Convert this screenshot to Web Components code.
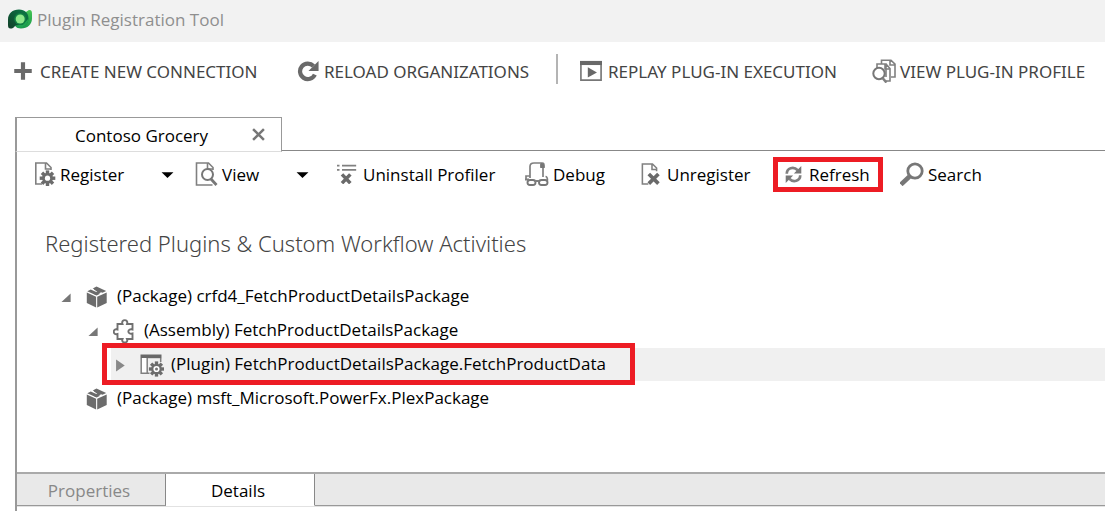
<!DOCTYPE html>
<html lang="en">
<head>
<meta charset="utf-8">
<meta name="viewport" content="width=device-width, initial-scale=1">
<title>Plugin Registration Tool</title>
<style>
  body { margin: 0; background: #fff; font-family: "Open Sans", "Noto Sans", sans-serif; font-size: 17px; line-height: 24px; color: #000; }
</style>
</head>
<body>
<prt-app></prt-app>

<template id="app-template">
  <style>
    :host { display: flex; flex-direction: column; min-height: 100vh; }
    .workspace { flex: 1; display: flex; flex-direction: column; margin-left: 15px; margin-top: 17px; }
    .panel { flex: 1; display: flex; flex-direction: column; border-left: 2px solid #999; }
    .tree-area { flex: 1; padding-bottom: 24px; }
    h2 { margin: 31px 0 21px 28px; font-family: "Noto Sans", "Open Sans", sans-serif; font-weight: 300; font-size: 22px; line-height: 32px; color: #444; }
  </style>
  <prt-titlebar>Plugin Registration Tool</prt-titlebar>
  <prt-commands></prt-commands>
  <main class="workspace">
    <prt-document-tab>Contoso Grocery</prt-document-tab>
    <div class="panel">
      <prt-toolbar></prt-toolbar>
      <section class="tree-area">
        <h2>Registered Plugins &amp; Custom Workflow Activities</h2>
        <prt-tree></prt-tree>
      </section>
      <prt-detail-tabs></prt-detail-tabs>
    </div>
  </main>
</template>

<template id="titlebar-template">
  <style>
    :host { display: block; background: #f2f2f2; color: #8f8f8f; }
    header { display: flex; align-items: center; height: 42px; padding: 0 8px; gap: 5px; box-sizing: border-box; }
    h1 { margin: 0; font-size: 17px; font-weight: 400; line-height: 24px; padding-bottom: 3px; }
    prt-icon { padding-bottom: 4px; }
  </style>
  <header><prt-icon name="logo" size="24"></prt-icon><h1><slot></slot></h1></header>
</template>

<template id="commands-template">
  <style>
    :host { display: block; font-family: "Noto Sans", "Open Sans", sans-serif; }
    nav { display: grid; grid-template-columns: 284px 259px 24px 292px auto; justify-content: start; align-items: center; height: 58px; padding-left: 13px; white-space: nowrap; }
    .sep { width: 2px; height: 30px; background: #b4b4b4; align-self: start; margin-top: 12px; }
    prt-button { color: #444; }
  </style>
  <nav aria-label="Commands">
    <prt-button icon="plus" size="20" style="--gap:7px">CREATE NEW CONNECTION</prt-button>
    <prt-button icon="reload" size="22" style="--gap:5px">RELOAD ORGANIZATIONS</prt-button>
    <div class="sep"></div>
    <prt-button icon="replay" size="22" style="--gap:6px">REPLAY PLUG-IN EXECUTION</prt-button>
    <prt-button icon="profile" size="24" style="--gap:4px">VIEW PLUG-IN PROFILE</prt-button>
  </nav>
</template>

<template id="button-template">
  <style>
    :host { display: block; }
    button { display: flex; align-items: center; gap: var(--gap, 4px); border: 0; background: none; padding: 0; margin: 0; font: inherit; color: inherit; white-space: nowrap; cursor: pointer; width: 100%; text-align: left; }
    span { padding-top: var(--drop, 2px); }
  </style>
  <button type="button"><prt-icon></prt-icon><span><slot></slot></span></button>
</template>

<template id="document-tab-template">
  <style>
    :host { display: flex; }
    .tab { display: flex; align-items: center; box-sizing: border-box; width: 267px; height: 35px; border: 2px solid #999; border-top-width: 1px; border-right-width: 1px; border-bottom: 1px solid #ddd; padding: 2px 16px 0 58px; justify-content: space-between; }
    .rest { flex: 1; border-bottom: 1px solid #888; margin-bottom: 1px; }
    button { border: 0; padding: 0; background: none; font: inherit; display: flex; cursor: pointer; }
    button.close { padding-bottom: 2px; }
  </style>
  <div class="tab">
    <button type="button"><slot></slot></button>
    <button type="button" class="close" aria-label="Close"><prt-icon name="close" size="13"></prt-icon></button>
  </div>
  <div class="rest"></div>
</template>

<template id="toolbar-template">
  <style>
    :host { display: block; }
    .bar { display: grid; grid-template-columns: 127px 34px 101px 41px 188px 116px 132px 127px auto; justify-content: start; align-items: center; height: 44px; padding-left: 17px; }
    .caret { border: 0; background: none; padding: 0; display: flex; cursor: pointer; }
    .marked { --drop: 0px; box-sizing: border-box; width: 110px; height: 35px; border: 5px solid #ed1c24; padding: 1px 0 0 7px; }
  </style>
  <div class="bar" role="toolbar">
    <prt-button icon="register" size="24" style="--gap:2px">Register</prt-button>
    <button class="caret" type="button" aria-label="Register options"><prt-icon name="caret" size="13"></prt-icon></button>
    <prt-button icon="view" size="24" style="--gap:3px">View</prt-button>
    <button class="caret" type="button" aria-label="View options"><prt-icon name="caret" size="13"></prt-icon></button>
    <prt-button icon="uninstall" size="20" style="--gap:6px">Uninstall Profiler</prt-button>
    <prt-button icon="debug" size="24">Debug</prt-button>
    <prt-button icon="unregister" size="22">Unregister</prt-button>
    <div class="marked"><prt-button icon="refresh" size="17" style="--gap:7px">Refresh</prt-button></div>
    <prt-button icon="search" size="24">Search</prt-button>
  </div>
</template>

<template id="tree-template">
  <style>:host { display: block; padding-left: 40px; }</style>
  <div role="tree" aria-label="Registered plugins">
    <prt-node icon="package" label="(Package) crfd4_FetchProductDetailsPackage" state="open">
      <prt-node icon="assembly" label="(Assembly) FetchProductDetailsPackage" state="open">
        <prt-node icon="plugin" label="(Plugin) FetchProductDetailsPackage.FetchProductData" state="closed" selected></prt-node>
      </prt-node>
    </prt-node>
    <prt-node icon="package" label="(Package) msft_Microsoft.PowerFx.PlexPackage"></prt-node>
  </div>
</template>

<template id="node-template">
  <style>
    :host { display: block; }
    .row { position: relative; display: grid; grid-template-columns: 25px 31px auto; justify-content: start; align-items: center; height: 33px; margin-bottom: 1px; padding-left: 4px; white-space: nowrap; }
    :host([selected]) .row { background: #f0f0f0; }
    :host([selected]) .row::after { content: ""; position: absolute; left: -9px; top: -5px; width: 533px; height: 42px; box-sizing: border-box; border: 5px solid #ed1c24; pointer-events: none; }
    .children { padding-left: 27px; }
    .label { padding-bottom: 2px; }
    .toggle { padding-top: 2px; }
    button { border: 0; background: none; padding: 0; display: flex; cursor: pointer; }
  </style>
  <div class="row"><span class="toggle"></span><prt-icon class="glyph" size="24"></prt-icon><span class="label"></span></div>
  <div class="children" role="group"><slot></slot></div>
</template>

<template id="detail-tabs-template">
  <style>
    :host { display: block; border-top: 2px solid #aaa; padding-bottom: 4px; }
    .tabs { display: flex; border-bottom: 1px solid #e2e2e2; }
    button { box-sizing: border-box; width: 149px; height: 32px; padding: 2px 4px 0 0; border: 0; border-right: 1px solid #888; border-bottom: 1px solid #999; background: #e9e9e9; color: #888; font: inherit; cursor: pointer; }
    button[aria-selected="true"] { background: #fff; color: #000; border-bottom-color: #fff; }
    .rest { flex: 1; background: #e9e9e9; border-bottom: 1px solid #999; }
  </style>
  <div class="tabs" role="tablist">
    <button type="button" role="tab" aria-selected="false">Properties</button>
    <button type="button" role="tab" aria-selected="true">Details</button>
    <div class="rest"></div>
  </div>
</template>

<script>
const gear = (cx, cy, r, hole) => {
  let teeth = "";
  for (let i = 0; i < 8; i++) teeth += `<rect x="${cx - r * .22}" y="${cy - r}" width="${r * .44}" height="${r * .6}" transform="rotate(${i * 45} ${cx} ${cy})"/>`;
  return `<g fill="#6c6c6c">${teeth}<circle cx="${cx}" cy="${cy}" r="${r * .7}"/></g><circle cx="${cx}" cy="${cy}" r="${hole}" fill="#fff"/>`;
};
const line = (d, w = 2, c = "#808080") => `<path d="${d}" fill="none" stroke="${c}" stroke-width="${w}"/>`;
const icons = {
  logo: `<defs><linearGradient id="a" x1="0" x2="1" y1="1" y2="0"><stop stop-color="#123f29"/><stop offset="1" stop-color="#0b7a48"/></linearGradient><linearGradient id="b" x1="0" x2="0" y1="1" y2="0"><stop stop-color="#18984b"/><stop offset="1" stop-color="#46c653"/></linearGradient></defs><path d="M21.5 3C23.5 3 24 4.500 24 7v4.500c0 6-4.500 10-11 10-2.500 0-4.500-.7-5.500-2.500L17 5c2 0 3-2 4.500-2z" fill="url(#b)"/><path d="M11 2.500C4.500 2.500 0 6.500 0 12.500V18c0 2.500.7 3.500 2.500 3.500 2 0 3-.6 4.500-2.500l7 1c4-1 6.500-4.500 6.500-8.500C20.500 6 17 2.500 11 2.500z" fill="url(#a)"/><path d="M20.500 11.500c0 5-4 9.500-9 8.900-2 0-4-.9-4.500-2l8-1z" fill="#1da350"/><circle cx="12.200" cy="12" r="6" fill="#108043"/><circle cx="12.200" cy="12" r="4.500" fill="#8de78a"/>`,
  plus: `<path d="M9.500 1.500h5v8h8v5h-8v8h-5v-8h-8v-5h8z" fill="#6a6a6a"/>`,
  reload: `<path d="M19.500 16A8.500 8.500 0 1 1 18 6.500" fill="none" stroke="#6a6a6a" stroke-width="4.600"/><path d="M23.500 1v10.900H12.500z" fill="#6a6a6a"/>`,
  replay: `<path d="M1 2h22v20H1z" fill="none" stroke="#777" stroke-width="1.800"/><path d="M0 1h24v4.500H0z" fill="#686868"/><path d="M8.500 8l10 5.500-10 5.500z" fill="#686868"/>`,
  profile: line("M5 9V5h9v13M14 5l4 4.500v12.500h-4M9.500 5V1.200H19l4 4V18h-4M18 1v5h5M13 5v5h5", 1.6) + `<circle cx="7" cy="14.500" r="5.700" fill="#fff" stroke="#777" stroke-width="2"/>` + line("M10.500 19l4 4.500", 2.6),
  close: line("M2 2l20 20M22 2L2 22", 4.6, "#777"),
  register: line("M8 22H1.800V1h10.700l4.500 4.500V8M11.500 1v6H17", 1.6) + gear(13.5, 16.2, 7.8, 2.6),
  view: line("M17.500 23H1.500V1h12l4.500 4.500V8M12.500 1v6H18", 1.6) + `<circle cx="12.500" cy="12.500" r="5.500" fill="#fff" stroke="#777" stroke-width="2"/>` + line("M16 17l5.500 6", 2.800, "#777"),
  uninstall: line("M0 2h3M6 2h17M0 7h3M6 7h17", 2) + line("M6 12.500L16 23M16 12.500L6 23", 4.200, "#6a6a6a"),
  debug: line("M5 16V4.500C5 1.500 7 1 9 1h8c2 0 2 1 2 4h-3V2M18 5v10M5 14H1v4M20.500 14.500c2 0 2 2 2 4", 1.700) + `<path d="M15.500 1c3 0 4 1 4 5h-4z" fill="#777"/><g fill="#fff" stroke="#777" stroke-width="1.900"><rect x="2.500" y="18" width="8" height="5" rx="2.500"/><rect x="14" y="18" width="8.500" height="5" rx="2.500"/></g>` + line("M0 17.500h4M9.500 19h5", 2),
  unregister: line("M8 23H1.500V1h11l4.500 4.500V9M12 1v6h5", 1.7) + line("M8.500 12l10.500 10.500M19 12L8.500 22.500", 4, "#6a6a6a"),
  refresh: line("M2.500 11C2.500 3 12 0 18 6M21.500 13c0 8-9.500 11-15.500 5", 3.8) + `<path d="M23 0v10.500H12.500zM1 24V13.500h10.500z" fill="#777"/>`,
  search: `<circle cx="15" cy="9" r="7.200" fill="none" stroke="#777" stroke-width="2.800"/>` + line("M9.500 14.500L1 22.500", 4.6, "#777"),
  caret: `<path d="M1 8h22L12 18.500z" fill="#000"/>`,
  open: `<path d="M21 3v19H1z" fill="#777"/>`,
  closed: `<path d="M2 1l16 11L2 23z" fill="#888"/>`,
  package: `<path d="M.8 7.500l9.300 4.300v10.700L.8 18zM11.200 11.800l9.500-4.300V18l-9.500 4.500zM1.300 6.200L4.800 4.500l9.300 4.200-3.500 1.900zM10.500 1.600l9.700 4.500-3.700 1.700-9.800-4.400z" fill="#6c6c6c"/>` + line("M8.500 3.600L13.500 6.800 8.500 9", 2.200, "#6c6c6c"),
  assembly: `<path d="M4.500 5h5C7.500-.2 16-.2 14 5h5.500v5.500c-5.500-1.300-5.500 5.300 0 4V20H14c2 4.500-6.500 4.500-4.500 0h-5v-5c-5 1.500-5-6 0-4.500z" fill="none" stroke="#707070" stroke-width="1.900"/>`,
  plugin: `<path d="M.5 1.500h21v3.700H.5z" fill="#686868"/><path d="M1.500 5h5.500v15.500H1.500z" fill="#fff"/>` + line("M1.200 5v15.300H9.500M7.200 5v15M20.700 5v4", 1.500) + gear(16.5, 16, 7.6, 3.1) + `<circle cx="16.500" cy="16" r="1.500" fill="#777"/>`
};

class Base extends HTMLElement {
  constructor(id) {
    super();
    this.attachShadow({ mode: "open" }).append(document.getElementById(id).content.cloneNode(true));
  }
}
class PrtIcon extends HTMLElement {
  static observedAttributes = ["name", "size"];
  constructor() { super(); this.attachShadow({ mode: "open" }); }
  connectedCallback() { this.render(); }
  attributeChangedCallback() { this.render(); }
  render() {
    const s = this.getAttribute("size") || 24;
    this.shadowRoot.innerHTML = `<style>:host{display:block;flex:none}svg{display:block}</style><svg width="${s}" height="${s}" viewBox="0 0 24 24" aria-hidden="true">${icons[this.getAttribute("name")] || ""}</svg>`;
  }
}
class PrtButton extends Base {
  constructor() { super("button-template"); }
  connectedCallback() {
    const icon = this.shadowRoot.querySelector("prt-icon");
    icon.setAttribute("name", this.getAttribute("icon"));
    icon.setAttribute("size", this.getAttribute("size"));
  }
}
class PrtNode extends Base {
  constructor() { super("node-template"); }
  connectedCallback() {
    const state = this.getAttribute("state");
    this.setAttribute("role", "treeitem");
    this.shadowRoot.querySelector(".label").textContent = this.getAttribute("label");
    this.shadowRoot.querySelector(".glyph").setAttribute("name", this.getAttribute("icon"));
    if (state) {
      this.setAttribute("aria-expanded", String(state === "open"));
      this.shadowRoot.querySelector(".toggle").innerHTML = `<button type="button" aria-label="Toggle"><prt-icon name="${state}" size="${state === "open" ? 11 : 13}"></prt-icon></button>`;
    }
  }
}
customElements.define("prt-icon", PrtIcon);
customElements.define("prt-button", PrtButton);
customElements.define("prt-node", PrtNode);
for (const name of ["titlebar", "commands", "document-tab", "toolbar", "tree", "detail-tabs", "app"])
  customElements.define("prt-" + name, class extends Base { constructor() { super(name + "-template"); } });
</script>
</body>
</html>
